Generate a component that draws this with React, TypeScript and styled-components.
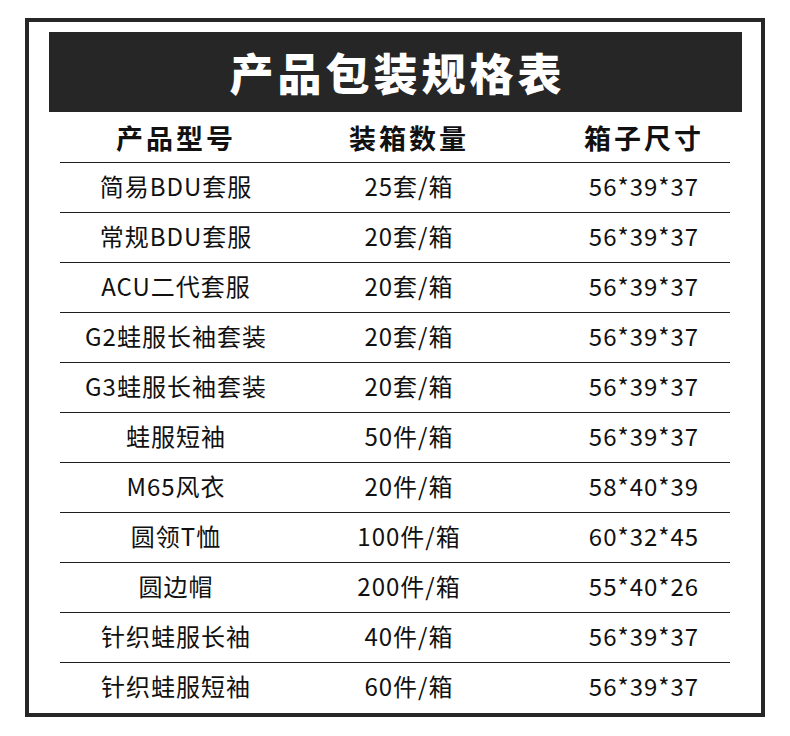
import { createGlobalStyle } from "styled-components";
import styled from "styled-components";

const Global = createGlobalStyle`
html, body {
    margin: 0;
    padding: 0;
    background: #fff;
}
body {
    font-family: "Noto Sans CJK SC", "Noto Sans", sans-serif;
    color: #111;
}
`;

const Page = styled.div`
width: 790px;
height: 736px;
padding: 18px 25px 0;
box-sizing: border-box;
`;

const Frame = styled.div`
width: 740px;
height: 699px;
box-sizing: border-box;
border: 4px solid #262626;
padding: 10px 19px 0 20px;
`;

const Title = styled.h1`
margin: 0;
height: 80px;
background: #262626;
color: #fff;
display: flex;
align-items: center;
justify-content: center;
font-size: 44px;
font-weight: 900;
letter-spacing: 4px;
line-height: 1;
padding-left: 4px;
`;

const Table = styled.div`
margin: 0 12px 0 11px;
display: flex;
flex-direction: column;
`;

const Row = styled.div<{ $head?: boolean }>`
height: 50px;
display: grid;
grid-template-columns: 232px 234px 204px;
align-items: center;
box-sizing: border-box;
padding-bottom: ${p => p.$head ? "0" : "3px"};
border-top: ${p => p.$head ? "none" : "1px solid #1e1e1e"};
font-size: ${p => p.$head ? "27px" : "24px"};
font-weight: ${p => p.$head ? 700 : 400};
letter-spacing: ${p => p.$head ? "3px" : "1px"};
`;

const Cell = styled.div<{ $shift?: number }>`
text-align: center;
white-space: nowrap;
line-height: 1;
padding-left: ${p => (p.$shift || 0) * 2}px;
`;

type item = [string, string, string];

const rows: item[] = [
    ["简易BDU套服", "25套/箱", "56*39*37"],
    ["常规BDU套服", "20套/箱", "56*39*37"],
    ["ACU二代套服", "20套/箱", "56*39*37"],
    ["G2蛙服长袖套装", "20套/箱", "56*39*37"],
    ["G3蛙服长袖套装", "20套/箱", "56*39*37"],
    ["蛙服短袖", "50件/箱", "56*39*37"],
    ["M65风衣", "20件/箱", "58*40*39"],
    ["圆领T恤", "100件/箱", "60*32*45"],
    ["圆边帽", "200件/箱", "55*40*26"],
    ["针织蛙服长袖", "40件/箱", "56*39*37"],
    ["针织蛙服短袖", "60件/箱", "56*39*37"],
];

export default function App() {
    return <Page>
        <Global />
        <Frame>
            <Title>产品包装规格表</Title>
            <Table>
                <Row $head>
                    <Cell>产品型号</Cell>
                    <Cell>装箱数量</Cell>
                    <Cell $shift={16}>箱子尺寸</Cell>
                </Row>
                { rows.map((r, i) => (
                    <Row key={ i }>
                        <Cell>{ r[0] }</Cell>
                        <Cell>{ r[1] }</Cell>
                        <Cell $shift={16}>{ r[2] }</Cell>
                    </Row>
                )) }
            </Table>
        </Frame>
    </Page>;
}
